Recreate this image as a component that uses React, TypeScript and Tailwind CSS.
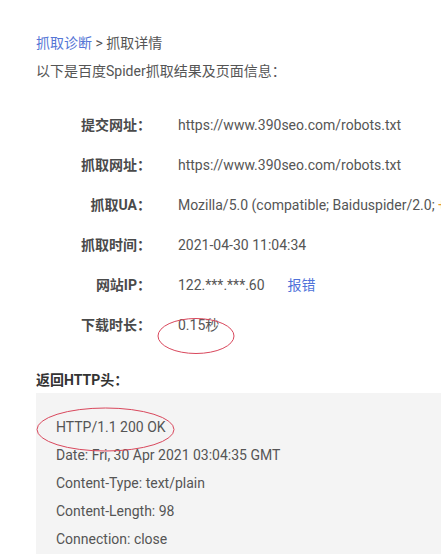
import React from "react";

const rows: { label: string; value: React.ReactNode }[] = [
  { label: "提交网址：", value: "https://www.390seo.com/robots.txt" },
  { label: "抓取网址：", value: "https://www.390seo.com/robots.txt" },
  {
    label: "抓取UA：",
    value: (
      <>
        Mozilla/5.0 (compatible; Baiduspider/2.0;{" "}
        <span className="text-[#e59b2f]">+http://www.baidu.com/search/spider.html)</span>
      </>
    ),
  },
  { label: "抓取时间：", value: "2021-04-30 11:04:34" },
  {
    label: "网站IP：",
    value: (
      <>
        122.***.***.60<span className="ml-[23px] text-[#4f72d9]">报错</span>
      </>
    ),
  },
  { label: "下载时长：", value: "0.15秒" },
];

const headers = [
  "HTTP/1.1 200 OK",
  "Date: Fri, 30 Apr 2021 03:04:35 GMT",
  "Content-Type: text/plain",
  "Content-Length: 98",
  "Connection: close",
];

export default function App() {
  return (
    <div
      className="relative h-[554px] w-[441px] overflow-hidden bg-white pl-[36px] pt-[33px] text-[14px] text-[#555]"
      style={{ fontFamily: 'Roboto, "Noto Sans CJK SC", sans-serif' }}
    >
      <div className="whitespace-nowrap leading-[20px]">
        <span className="text-[#5576d6]">抓取诊断</span>
        <span> &gt; 抓取详情</span>
      </div>
      <div className="mt-[8px] whitespace-nowrap leading-[20px]">以下是百度Spider抓取结果及页面信息：</div>

      <div className="mt-[24px] flex flex-col">
        {rows.map((r, i) => (
          <div key={i} className="flex h-[40px] items-center whitespace-nowrap">
            <div className="w-[115px] shrink-0 text-right font-bold text-[#4a4a4a]">{r.label}</div>
            <div className="ml-[27px] shrink-0">{r.value}</div>
          </div>
        ))}
      </div>

      <div className="mt-[25px] font-bold leading-[20px] text-[#333]">返回HTTP头：</div>
      <div className="mt-[3px] w-[440px] bg-[#f4f4f4] pl-[20px] pt-[20px] pb-[20px]">
        {headers.map((h, i) => (
          <div key={i} className="h-[28px] whitespace-nowrap leading-[28px]">
            {h}
          </div>
        ))}
      </div>

      <svg className="pointer-events-none absolute left-0 top-0" width="441" height="554">
        <ellipse cx="196" cy="336" rx="38" ry="17.5" fill="none" stroke="#d9475c" strokeWidth="1" />
        <ellipse cx="105.5" cy="429.5" rx="68.5" ry="21.5" fill="none" stroke="#d9475c" strokeWidth="1" />
      </svg>
    </div>
  );
}
